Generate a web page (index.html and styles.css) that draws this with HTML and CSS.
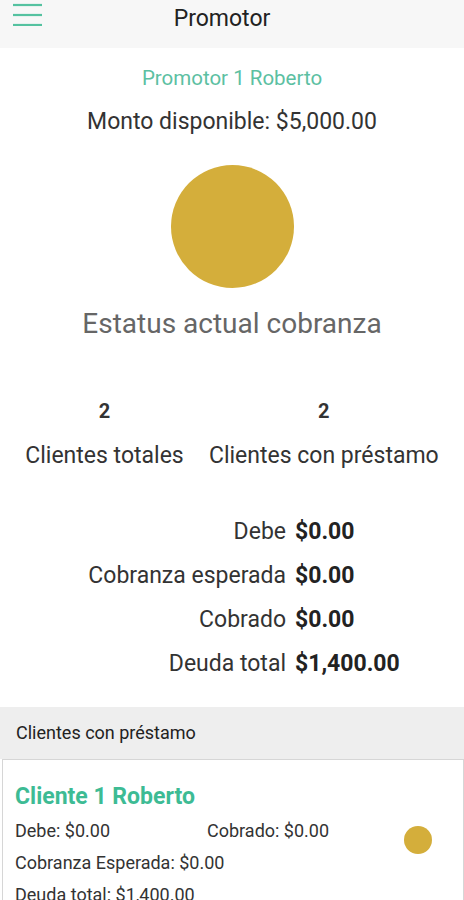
FILE: index.html
```html
<!DOCTYPE html>
<html lang="es">
<head>
<meta charset="utf-8">
<link rel="stylesheet" href="styles.css">
</head>
<body>
<header class="topbar">
  <button class="menu" aria-label="Menú">
    <svg width="30" height="24" viewBox="0 0 30 24"><g stroke="#55c2a0" stroke-width="2.2"><line x1="0" y1="3" x2="29" y2="3"/><line x1="0" y1="13" x2="29" y2="13"/><line x1="0" y1="23" x2="29" y2="23"/></g></svg>
  </button>
  <h1 class="title">Promotor</h1>
</header>
<main class="content">
  <p class="promotor">Promotor 1 Roberto</p>
  <p class="monto">Monto disponible: $5,000.00</p>
  <div class="status-dot"></div>
  <h2 class="estatus">Estatus actual cobranza</h2>
  <div class="counts">
    <div class="count"><span class="num">2</span><span class="lbl">Clientes totales</span></div>
    <div class="count"><span class="num">2</span><span class="lbl">Clientes con préstamo</span></div>
  </div>
  <div class="summary">
    <span class="s-label">Debe</span><span class="s-value">$0.00</span>
    <span class="s-label">Cobranza esperada</span><span class="s-value">$0.00</span>
    <span class="s-label">Cobrado</span><span class="s-value">$0.00</span>
    <span class="s-label">Deuda total</span><span class="s-value">$1,400.00</span>
  </div>
  <div class="section-head">Clientes con préstamo</div>
  <div class="card">
    <div class="card-body">
      <div class="card-name">Cliente 1 Roberto</div>
      <div class="card-row"><span class="c1">Debe: $0.00</span><span>Cobrado: $0.00</span></div>
      <div class="card-row">Cobranza Esperada: $0.00</div>
      <div class="card-row">Deuda total: $1,400.00</div>
    </div>
    <div class="mini-dot"></div>
  </div>
</main>
</body>
</html>
```
FILE: styles.css
```css
* { box-sizing: border-box; }
html, body { margin: 0; padding: 0; }
body {
  width: 464px;
  height: 900px;
  overflow: hidden;
  background: #fff;
  font-family: Roboto, "Liberation Sans", sans-serif;
  color: #333;
}
.topbar {
  position: relative;
  height: 48px;
  background: #f7f7f7;
  display: flex;
  align-items: flex-start;
  justify-content: center;
}
.menu {
  position: absolute;
  left: 13px;
  top: 2px;
  border: 0;
  background: none;
  padding: 0;
  line-height: 0;
}
.title {
  margin: 0 20px 0 0;
  padding-top: 5px;
  font-size: 23px;
  font-weight: 400;
  color: #222;
  line-height: 28px;
}
.content { display: flex; flex-direction: column; align-items: center; }
.promotor {
  margin: 18px 0 0;
  font-size: 20.5px;
  line-height: 24px;
  color: #5cc0a2;
}
.monto {
  margin: 19px 0 0;
  font-size: 23px;
  line-height: 26px;
  color: #333;
}
.status-dot {
  margin-top: 30px;
  width: 123px;
  height: 123px;
  border-radius: 50%;
  background: #d4ae3b;
}
.estatus {
  margin: 20px 0 0;
  font-size: 28px;
  font-weight: 400;
  line-height: 32px;
  color: #666;
}
.counts {
  margin-top: 59px;
  align-self: stretch;
  display: flex;
  justify-content: space-evenly;
}
.count { display: flex; flex-direction: column; align-items: center; }
.num { font-size: 20px; font-weight: 700; line-height: 24px; color: #333; }
.lbl { margin-top: 20px; font-size: 23px; line-height: 26px; color: #333; }
.summary {
  margin-top: 50px;
  align-self: stretch;
  display: grid;
  grid-template-columns: 286px 1fr;
  column-gap: 9px;
  row-gap: 18px;
  font-size: 23px;
  line-height: 26px;
}
.s-label { text-align: right; color: #333; }
.s-value { font-weight: 700; color: #222; }
.section-head {
  margin-top: 30px;
  align-self: stretch;
  background: #eeeeee;
  height: 52px;
  padding: 15px 16px 0;
  font-size: 18px;
  line-height: 22px;
  color: #222;
}
.card {
  align-self: stretch;
  margin: 0 0 0 2px;
  border: 1px solid #d6d6d6;
  border-bottom: 0;
  background: #fff;
  display: flex;
  align-items: flex-start;
  padding: 23px 0 0 12px;
  height: 160px;
}
.card-body { flex: 1; }
.card-name {
  font-size: 23px;
  font-weight: 700;
  color: #3dbb94;
  line-height: 28px;
}
.card-row {
  margin-top: 9px;
  font-size: 18px;
  line-height: 22px;
  color: #333;
  display: flex;
}
.card-row + .card-row { margin-top: 10px; }
.c1 { width: 192px; }
.mini-dot {
  margin: 43px 31px 0 0;
  width: 28px;
  height: 28px;
  border-radius: 50%;
  background: #d4ae3b;
}
```
